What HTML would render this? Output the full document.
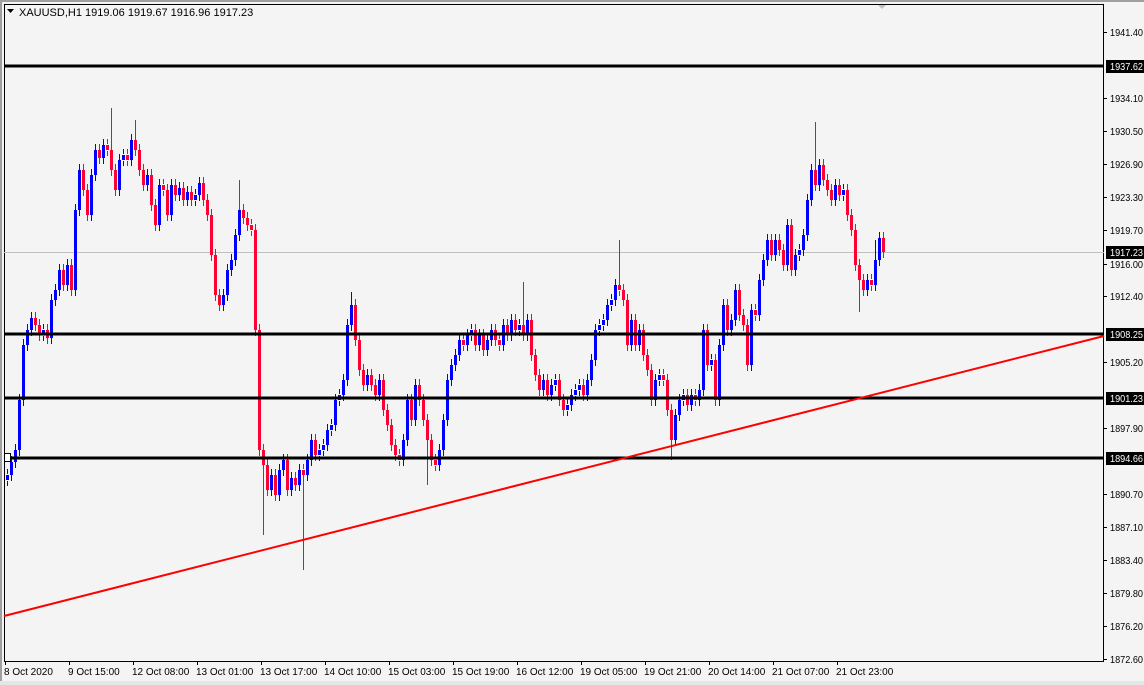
<!DOCTYPE html>
<html><head><meta charset="utf-8"><style>
html,body{margin:0;padding:0;background:#f4f4f4;}
svg{display:block;font-family:"Liberation Sans",sans-serif;}
</style></head><body>
<svg width="1144" height="685" xmlns="http://www.w3.org/2000/svg" xmlns:xlink="http://www.w3.org/1999/xlink">
<defs>
<path id="bb" d="M7.5 480V475M11.5 475V462M15.5 462V450M19.5 450V400M23.5 400V345M27.5 345V330M31.5 330V318M43.5 335V330M51.5 338V300M55.5 300V290M59.5 290V270M67.5 285V265M75.5 290V210M79.5 210V170M91.5 215V175M95.5 175V150M103.5 158V145M119.5 190V160M123.5 160V155M131.5 160V140M147.5 185V175M159.5 225V185M171.5 215V185M179.5 195V188M187.5 200V192M195.5 200V195M199.5 195V183M223.5 305V295M227.5 295V270M231.5 270V260M235.5 260V235M239.5 235V210M271.5 490V475M279.5 495V470M283.5 470V460M291.5 490V478M299.5 485V470M307.5 475V460M311.5 460V440M319.5 455V450M323.5 450V445M327.5 445V430M331.5 430V425M335.5 425V400M339.5 400V395M343.5 395V380M347.5 380V325M351.5 325V305M367.5 385V375M379.5 395V380M403.5 460V440M407.5 440V400M415.5 420V385M439.5 465V450M443.5 450V420M447.5 420V380M451.5 380V365M455.5 365V355M459.5 355V340M467.5 345V335M471.5 335V330M479.5 345V335M487.5 350V340M491.5 340V330M503.5 345V325M511.5 335V320M519.5 330V325M527.5 335V320M543.5 390V380M551.5 395V385M555.5 385V380M567.5 410V405M571.5 405V395M575.5 395V390M579.5 390V385M587.5 395V380M591.5 380V360M595.5 360V330M599.5 330V325M603.5 325V320M607.5 320V305M611.5 305V300M615.5 300V285M631.5 345V320M639.5 345V330M655.5 400V380M659.5 380V375M675.5 440V415M679.5 415V400M683.5 400V395M691.5 405V395M699.5 400V390M703.5 390V330M711.5 365V360M719.5 400V345M723.5 345V305M731.5 330V320M735.5 320V290M751.5 365V310M759.5 315V280M763.5 280V260M767.5 260V240M775.5 255V240M787.5 265V225M795.5 270V255M799.5 255V250M803.5 250V235M807.5 235V200M811.5 200V170M819.5 185V165M835.5 200V185M843.5 195V190M867.5 290V280M875.5 285V260M879.5 260V238"/>
<path id="rr" d="M35.5 318V325M39.5 325V335M47.5 330V338M63.5 270V285M71.5 265V290M83.5 170V190M87.5 190V215M99.5 150V158M107.5 145V150M111.5 150V170M115.5 170V190M127.5 155V160M135.5 140V150M139.5 150V170M143.5 170V185M151.5 175V205M155.5 205V225M163.5 185V190M167.5 190V215M175.5 185V195M183.5 188V200M191.5 192V200M203.5 183V200M207.5 200V215M211.5 215V255M215.5 255V295M219.5 295V305M243.5 210V218M247.5 218V225M251.5 225V230M255.5 230V330M259.5 330V450M263.5 450V465M267.5 465V490M275.5 475V495M287.5 460V490M295.5 478V485M303.5 470V475M315.5 440V455M355.5 305V340M359.5 340V370M363.5 370V385M371.5 375V385M375.5 385V395M383.5 380V410M387.5 410V425M391.5 425V445M395.5 445V455M399.5 455V460M411.5 400V420M419.5 385V400M423.5 400V420M427.5 420V440M431.5 440V460M435.5 460V465M463.5 340V345M475.5 330V345M483.5 335V350M495.5 330V340M499.5 340V345M507.5 325V335M515.5 320V330M523.5 325V335M531.5 320V355M535.5 355V375M539.5 375V390M547.5 380V395M559.5 380V400M563.5 400V410M583.5 385V395M619.5 285V290M623.5 290V300M627.5 300V345M635.5 320V345M643.5 330V355M647.5 355V370M651.5 370V400M663.5 375V380M667.5 380V410M671.5 410V440M687.5 395V405M695.5 395V400M707.5 330V365M715.5 360V400M727.5 305V330M739.5 290V315M743.5 315V325M747.5 325V365M755.5 310V315M771.5 240V255M779.5 240V250M783.5 250V265M791.5 225V270M815.5 170V185M823.5 165V180M827.5 180V190M831.5 190V200M839.5 185V195M847.5 190V215M851.5 215V230M855.5 230V265M859.5 265V280M863.5 280V290M871.5 280V285M883.5 238V252"/>
</defs>
<rect x="0" y="0" width="1144" height="685" fill="#f4f4f4"/>
<rect x="0" y="0" width="1144" height="2" fill="#a0a0a0"/>
<rect x="0" y="0" width="2" height="685" fill="#a0a0a0"/>
<rect x="0" y="681" width="1144" height="4" fill="#e6e6e6"/>
<rect x="4.5" y="4.5" width="1099" height="657" fill="#f4f4f4" stroke="#000" stroke-width="1"/>
<polygon points="878,5 886,5 882,9" fill="#c0c0c0"/>
<line x1="4" y1="252.5" x2="1104" y2="252.5" stroke="#c0c0c0" stroke-width="1"/>
<g fill="none" stroke="#0000ff">
<use xlink:href="#bb" href="#bb" stroke-width="1" transform="translate(0,-6)"/>
<use xlink:href="#bb" href="#bb" stroke-width="1" transform="translate(0,6)"/>
<use xlink:href="#bb" href="#bb" stroke-width="3"/>
<path stroke-width="1" d="M351.5 305V292M875.5 260V240"/>
</g>
<g fill="none" stroke="#ff0033">
<use xlink:href="#rr" href="#rr" stroke-width="1" transform="translate(0,-6)"/>
<use xlink:href="#rr" href="#rr" stroke-width="1" transform="translate(0,6)"/>
<use xlink:href="#rr" href="#rr" stroke-width="3"/>
<path stroke-width="1" d="M111.5 150V108M135.5 140V120M263.5 465V535M303.5 475V570M619.5 285V240M815.5 170V122M859.5 280V312M523.5 325V282M427.5 440V485M239.5 210V180M671.5 440V460"/>
</g>
<g fill="#000">
<rect x="5" y="64.5" width="1099" height="3"/>
<rect x="5" y="332.5" width="1099" height="3"/>
<rect x="5" y="396.5" width="1099" height="3"/>
<rect x="5" y="456.5" width="1099" height="3"/>
</g>
<line x1="4" y1="616" x2="1104" y2="336" stroke="#ff0000" stroke-width="2"/>
<polygon points="7,9 14,9 10.5,13" fill="#000"/>
<text x="19" y="16" font-size="11" fill="#000">XAUUSD,H1  1919.06 1919.67 1916.96 1917.23</text>
<g font-size="10.5" fill="#000">
<rect x="1104" y="32" width="3" height="1"/><text x="1110" y="36" textLength="33" lengthAdjust="spacingAndGlyphs">1941.40</text>
<rect x="1104" y="98" width="3" height="1"/><text x="1110" y="102" textLength="33" lengthAdjust="spacingAndGlyphs">1934.10</text>
<rect x="1104" y="131" width="3" height="1"/><text x="1110" y="135" textLength="33" lengthAdjust="spacingAndGlyphs">1930.50</text>
<rect x="1104" y="164" width="3" height="1"/><text x="1110" y="168" textLength="33" lengthAdjust="spacingAndGlyphs">1926.90</text>
<rect x="1104" y="197" width="3" height="1"/><text x="1110" y="201" textLength="33" lengthAdjust="spacingAndGlyphs">1923.30</text>
<rect x="1104" y="230" width="3" height="1"/><text x="1110" y="234" textLength="33" lengthAdjust="spacingAndGlyphs">1919.70</text>
<rect x="1104" y="264" width="3" height="1"/><text x="1110" y="268" textLength="33" lengthAdjust="spacingAndGlyphs">1916.00</text>
<rect x="1104" y="296" width="3" height="1"/><text x="1110" y="300" textLength="33" lengthAdjust="spacingAndGlyphs">1912.40</text>
<rect x="1104" y="362" width="3" height="1"/><text x="1110" y="366" textLength="33" lengthAdjust="spacingAndGlyphs">1905.20</text>
<rect x="1104" y="428" width="3" height="1"/><text x="1110" y="432" textLength="33" lengthAdjust="spacingAndGlyphs">1897.90</text>
<rect x="1104" y="494" width="3" height="1"/><text x="1110" y="498" textLength="33" lengthAdjust="spacingAndGlyphs">1890.70</text>
<rect x="1104" y="527" width="3" height="1"/><text x="1110" y="531" textLength="33" lengthAdjust="spacingAndGlyphs">1887.10</text>
<rect x="1104" y="560" width="3" height="1"/><text x="1110" y="564" textLength="33" lengthAdjust="spacingAndGlyphs">1883.40</text>
<rect x="1104" y="593" width="3" height="1"/><text x="1110" y="597" textLength="33" lengthAdjust="spacingAndGlyphs">1879.80</text>
<rect x="1104" y="626" width="3" height="1"/><text x="1110" y="630" textLength="33" lengthAdjust="spacingAndGlyphs">1876.20</text>
<rect x="1104" y="659" width="3" height="1"/><text x="1110" y="663" textLength="33" lengthAdjust="spacingAndGlyphs">1872.60</text>
<rect x="1106" y="60" width="38" height="13"/><text x="1110" y="70" fill="#fff" textLength="33" lengthAdjust="spacingAndGlyphs">1937.62</text>
<rect x="1106" y="246" width="38" height="13"/><text x="1110" y="256" fill="#fff" textLength="33" lengthAdjust="spacingAndGlyphs">1917.23</text>
<rect x="1106" y="328" width="38" height="13"/><text x="1110" y="338" fill="#fff" textLength="33" lengthAdjust="spacingAndGlyphs">1908.25</text>
<rect x="1106" y="392" width="38" height="13"/><text x="1110" y="402" fill="#fff" textLength="33" lengthAdjust="spacingAndGlyphs">1901.23</text>
<rect x="1106" y="452" width="38" height="13"/><text x="1110" y="462" fill="#fff" textLength="33" lengthAdjust="spacingAndGlyphs">1894.66</text>
<g font-size="10">
<rect x="5" y="662" width="1" height="3"/><text x="4" y="675">8 Oct 2020</text>
<rect x="69" y="662" width="1" height="3"/><text x="68" y="675">9 Oct 15:00</text>
<rect x="133" y="662" width="1" height="3"/><text x="132" y="675">12 Oct 08:00</text>
<rect x="197" y="662" width="1" height="3"/><text x="196" y="675">13 Oct 01:00</text>
<rect x="261" y="662" width="1" height="3"/><text x="260" y="675">13 Oct 17:00</text>
<rect x="325" y="662" width="1" height="3"/><text x="324" y="675">14 Oct 10:00</text>
<rect x="389" y="662" width="1" height="3"/><text x="388" y="675">15 Oct 03:00</text>
<rect x="453" y="662" width="1" height="3"/><text x="452" y="675">15 Oct 19:00</text>
<rect x="517" y="662" width="1" height="3"/><text x="516" y="675">16 Oct 12:00</text>
<rect x="581" y="662" width="1" height="3"/><text x="580" y="675">19 Oct 05:00</text>
<rect x="645" y="662" width="1" height="3"/><text x="644" y="675">19 Oct 21:00</text>
<rect x="709" y="662" width="1" height="3"/><text x="708" y="675">20 Oct 14:00</text>
<rect x="773" y="662" width="1" height="3"/><text x="772" y="675">21 Oct 07:00</text>
<rect x="837" y="662" width="1" height="3"/><text x="836" y="675">21 Oct 23:00</text>
</g>
</g>
<rect x="4.5" y="453.5" width="6" height="8" fill="#fff" stroke="#000" stroke-width="1"/>
</svg>
</body></html>
